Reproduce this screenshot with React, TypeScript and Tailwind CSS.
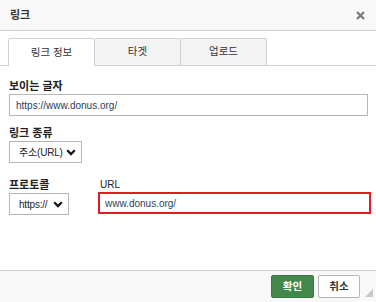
const font = "font-['Arial','Liberation_Sans','Noto_Sans_CJK_KR',sans-serif]";

function Chevron() {
  return (
    <svg width="10" height="7" viewBox="0 0 10 7" className="shrink-0">
      <path d="M1.2 1.3 L5 5.1 L8.8 1.3" fill="none" stroke="#111" strokeWidth="2.2" />
    </svg>
  );
}

function FakeSelect({ value, width, pl }: { value: string; width: string; pl: string }) {
  return (
    <div
      className={`${width} ${pl} h-[22px] border border-[#b6b6b6] bg-white flex items-center justify-between pr-[5px] text-[10px] tracking-[-0.2px] text-[#222] whitespace-nowrap`}
    >
      <span>{value}</span>
      <Chevron />
    </div>
  );
}

export default function App() {
  return (
    <div className={`w-[376px] h-[302px] bg-white flex flex-col text-[#333] ${font}`}>
      <div className="h-[31px] bg-[#f8f8f8] border-b border-[#d1d1d1] flex items-center justify-between pl-[10px] pr-[10px] shrink-0">
        <span className="text-[11px] font-bold text-[#333]">링크</span>
        <svg width="9" height="9" viewBox="0 0 9 9" className="mr-[1px]">
          <path d="M1 1 L8 8 M8 1 L1 8" stroke="#7a7a7a" strokeWidth="2.2" />
        </svg>
      </div>

      <div className="mt-[7px] pl-[8px] flex border-b border-[#d1d1d1] h-[28px] shrink-0">
        <div className="w-[87px] h-[28px] bg-white border border-[#d1d1d1] border-b-0 rounded-t-[2px] flex items-center justify-center text-[10.5px] text-[#333] relative z-10 -mb-px">
          링크 정보
        </div>
        <div className="w-[86px] h-[27px] bg-[#f3f3f3] border border-[#d1d1d1] border-l-0 border-b-0 rounded-t-[2px] flex items-center justify-center text-[10.5px] text-[#333]">
          타겟
        </div>
        <div className="w-[86px] h-[27px] bg-[#f3f3f3] border border-[#d1d1d1] border-l-0 border-b-0 rounded-t-[2px] flex items-center justify-center text-[10.5px] text-[#333]">
          업로드
        </div>
      </div>

      <div className="flex-1 px-[9px] pt-[14px]">
        <div className="text-[11px] leading-[12px] text-[#222] font-bold">보이는 글자</div>
        <div className="mt-[2px] w-[359px] h-[22px] border border-[#b6b6b6] flex items-center pl-[6px] text-[10px] text-[#2b3f5c]">
          https://www.donus.org/
        </div>

        <div className="mt-[11px] text-[11px] leading-[12px] text-[#222] font-bold">링크 종류</div>
        <div className="mt-[2px]">
          <FakeSelect value="주소(URL)" width="w-[73px]" pl="pl-[9px]" />
        </div>

        <div className="mt-[16px] flex gap-[29px]">
          <div className="flex flex-col">
            <div className="text-[11px] leading-[12px] text-[#222] font-bold">프로토콜</div>
            <div className="mt-[2px]">
              <FakeSelect value="https://" width="w-[60px]" pl="pl-[9px]" />
            </div>
          </div>
          <div className="flex flex-col">
            <div className="text-[10px] leading-[12px] text-[#222] pl-[2px]">URL</div>
            <div className="mt-[1px] w-[273px] h-[22px] border-2 border-[#e21b23] flex items-center pl-[5px] text-[10px] text-[#2b3f5c]">
              www.donus.org/
            </div>
          </div>
        </div>
      </div>

      <div className="h-[32px] bg-[#f8f8f8] border-t border-[#d1d1d1] flex items-center justify-end pr-[16px] gap-[4px] shrink-0 relative">
        <div className="w-[43px] h-[23px] bg-[#43874a] border border-[#3a7a40] rounded-[2px] flex items-center justify-center text-[10.5px] font-bold text-white">
          확인
        </div>
        <div className="w-[42px] h-[23px] bg-white border border-[#b6b6b6] rounded-[2px] flex items-center justify-center text-[10.5px] font-bold text-[#333]">
          취소
        </div>
        <svg width="8" height="8" viewBox="0 0 8 8" className="absolute right-[3px] bottom-[5px]">
          <path d="M8 0 L8 8 L0 8 Z" fill="#c8c8c8" />
        </svg>
      </div>
    </div>
  );
}
